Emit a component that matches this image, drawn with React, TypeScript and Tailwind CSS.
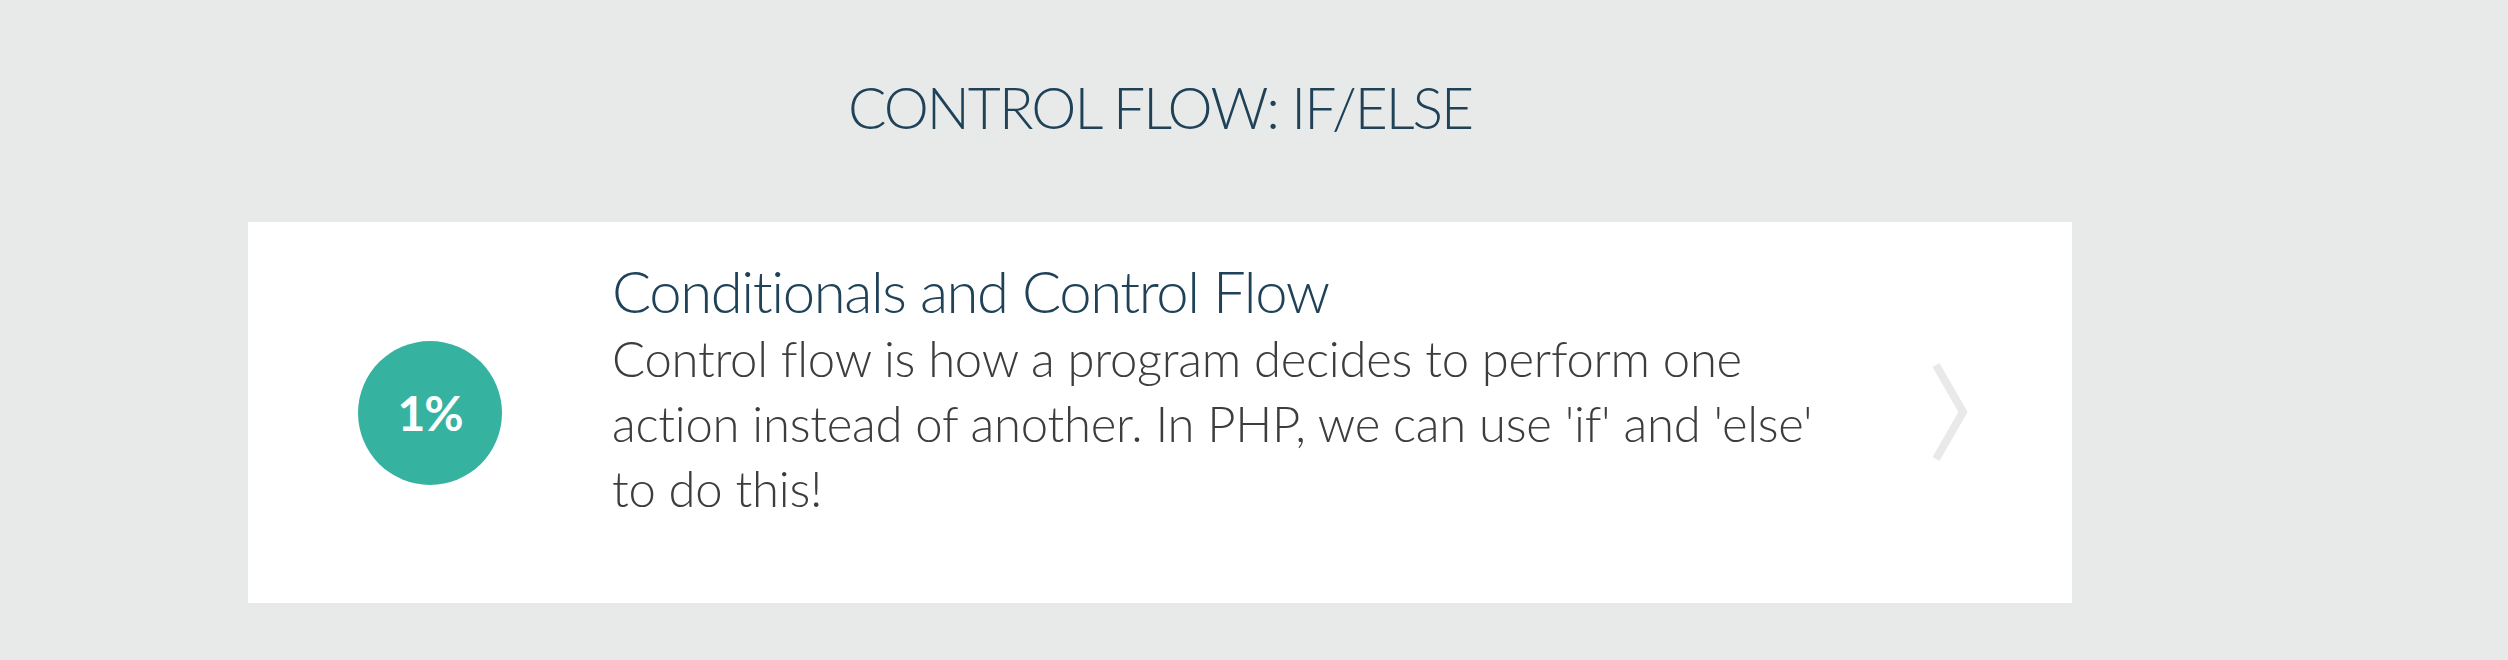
export default function App() {
  return (
    <div className="min-h-[660px] w-full bg-[#e8eae9]" style={{ fontFamily: "Lato, 'Open Sans', sans-serif" }}>
      <div className="ml-[248px] w-[1824px] pt-[79px]">
        <h1 className="text-center text-[57px] leading-none font-light text-[#1f4258] tracking-[-2px]">
          CONTROL FLOW: IF/ELSE
        </h1>
        <div className="mt-[86px] flex bg-white">
          <div className="flex w-[364px] shrink-0 items-center justify-center self-center">
            <div className="flex h-[144px] w-[144px] items-center justify-center rounded-full bg-[#36b3a0]">
              <span className="text-[48px] font-bold leading-none tracking-[-1px] text-white">1%</span>
            </div>
          </div>
          <div className="w-[1218px] shrink-0 pt-[36px] pb-[82px]">
            <h2 className="text-[58px] leading-[65px] font-light tracking-[-1.4px] text-[#1f4258]">Conditionals and Control Flow</h2>
            <p className="mt-[3px] text-[49px] leading-[65px] font-light tracking-[-0.25px] text-[#3d3d3d]">
              Control flow is how a program decides to perform one action instead of another. In PHP, we can use 'if' and 'else' to do this!
            </p>
          </div>
          <div className="flex flex-1 items-center self-center pl-[100px]">
            <svg width="44" height="104" viewBox="0 0 44 104" fill="none">
              <polyline points="6,4 33,51 6,98" stroke="#e8e9e8" strokeWidth="8" strokeLinejoin="miter" />
            </svg>
          </div>
        </div>
      </div>
    </div>
  );
}
